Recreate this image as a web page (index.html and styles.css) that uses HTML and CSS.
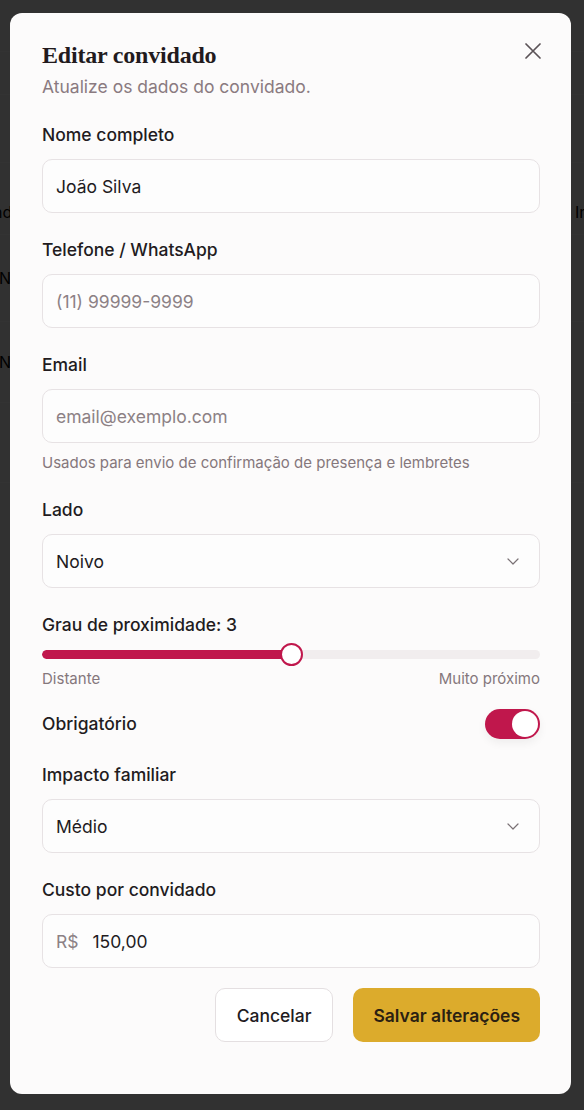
FILE: index.html
```html
<!DOCTYPE html>
<html lang="pt-BR">
<head>
<meta charset="utf-8">
<title>Editar convidado</title>
<link rel="stylesheet" href="styles.css">
</head>
<body>
<div class="page">
  <div class="bg-row r1"></div>
  <div class="bg-row r2"></div>
  <div class="bg-row r3"></div>
  <div class="bg-row r4"><span class="bg-left">Grand</span><span class="bg-right">Impacto</span></div>
  <div class="bg-row r5"><span class="bg-left2">Noivo</span></div>
  <div class="bg-row r6"><span class="bg-left2">Noiva</span></div>
  <div class="bg-row r7"></div>
</div>
<div class="overlay"></div>

<div class="modal" role="dialog">
  <button class="close" aria-label="Fechar">
    <svg width="16" height="16" viewBox="0 0 16 16"><path d="M1 1L15 15M15 1L1 15" stroke="#5b5357" stroke-width="1.7" stroke-linecap="round" fill="none"/></svg>
  </button>
  <h2 class="title">Editar convidado</h2>
  <p class="subtitle">Atualize os dados do convidado.</p>

  <div class="form">
    <div class="field">
      <label class="label">Nome completo</label>
      <div class="input"><span class="value">João Silva</span></div>
    </div>
    <div class="field">
      <label class="label">Telefone / WhatsApp</label>
      <div class="input"><span class="placeholder">(11) 99999-9999</span></div>
    </div>
    <div class="field">
      <label class="label">Email</label>
      <div class="input"><span class="placeholder">email@exemplo.com</span></div>
      <p class="help">Usados para envio de confirmação de presença e lembretes</p>
    </div>
    <div class="field">
      <label class="label">Lado</label>
      <div class="input select"><span class="value">Noivo</span>
        <svg class="chev" width="12" height="7" viewBox="0 0 12 7"><path d="M1 1L6 6L11 1" stroke="#7a7175" stroke-width="1.2" fill="none" stroke-linecap="round" stroke-linejoin="round"/></svg>
      </div>
    </div>
    <div class="field">
      <label class="label">Grau de proximidade: 3</label>
      <div class="range">
        <div class="track"><div class="fill" style="width:50%"></div></div>
        <div class="thumb" style="left:50%"></div>
      </div>
      <div class="range-labels"><span>Distante</span><span>Muito próximo</span></div>
    </div>
    <div class="switch-row">
      <span class="label">Obrigatório</span>
      <span class="switch on"><span class="knob"></span></span>
    </div>
    <div class="field">
      <label class="label">Impacto familiar</label>
      <div class="input select"><span class="value">Médio</span>
        <svg class="chev" width="12" height="7" viewBox="0 0 12 7"><path d="M1 1L6 6L11 1" stroke="#7a7175" stroke-width="1.2" fill="none" stroke-linecap="round" stroke-linejoin="round"/></svg>
      </div>
    </div>
    <div class="field">
      <label class="label">Custo por convidado</label>
      <div class="input"><span class="prefix">R$</span><span class="value">150,00</span></div>
    </div>
  </div>

  <div class="actions">
    <button class="btn btn-outline">Cancelar</button>
    <button class="btn btn-primary">Salvar alterações</button>
  </div>
</div>
</body>
</html>
```

FILE: styles.css
```css
* { box-sizing: border-box; }
html, body { margin: 0; padding: 0; }
body {
  width: 584px;
  height: 1110px;
  overflow: hidden;
  background: #f4f4f4;
  font-family: Inter, "Noto Sans", sans-serif;
}

/* page behind the dialog */
.page { width: 584px; }
.bg-row {
  display: flex;
  justify-content: space-between;
  align-items: flex-end;
  border-bottom: 1px solid #ffffff;
  font-size: 16px;
  color: #000;
  overflow: hidden;
}
.r1 { height: 52px; }
.r2 { height: 43px; }
.r3 { height: 68px; }
.r4 { height: 72px; padding-bottom: 12px; }
.r5 { height: 87px; align-items: center; }
.r6 { height: 81px; align-items: center; }
.r7 { height: 80px; }
.bg-left { margin-left: -34px; }
.bg-right { margin-right: -52px; }
.bg-left2 { margin-left: -1px; }

.overlay {
  position: fixed;
  inset: 0;
  background: rgba(0, 0, 0, 0.8);
}

/* dialog */
.modal {
  position: fixed;
  left: 10px;
  top: 13px;
  width: 561px;
  padding: 28px 31px 52px 32px;
  background: #fcfbfb;
  border-radius: 12px;
  color: #221b1e;
}
.close {
  position: absolute;
  top: 30px;
  left: 515px;
  width: 16px;
  height: 16px;
  padding: 0;
  border: 0;
  background: none;
  display: flex;
}
.title {
  margin: 0;
  font-family: "Liberation Serif", "Times New Roman", serif;
  font-weight: 700;
  font-size: 24px;
  line-height: 28px;
  color: #221a1d;
  letter-spacing: -0.2px;
}
.subtitle {
  margin: 6px 0 0;
  font-size: 17.5px;
  line-height: 24px;
  color: #8a7a80;
}

.form {
  margin-top: 24px;
  display: flex;
  flex-direction: column;
}
.field { display: flex; flex-direction: column; }
.form > * + * { margin-top: 25px; }
.form > .switch-row { margin-top: 20px; }
.form > .switch-row + .field { margin-top: 24px; }

.label {
  font-size: 17.5px;
  line-height: 24px;
  font-weight: 450;
  color: #221b1e;
}
.field .label + * { margin-top: 12px; }

.input {
  height: 54px;
  border: 1px solid #e7e2e4;
  border-radius: 10px;
  background: #fdfdfd;
  display: flex;
  align-items: center;
  padding: 0 13px;
  font-size: 17.5px;
}
.value { color: #221b1e; }
.placeholder { color: #8c8185; }
.prefix { color: #8c8185; margin-right: 14px; }
.select { justify-content: space-between; padding-right: 20px; }
.chev { display: block; }

.help {
  margin: 10px 0 0;
  font-size: 15px;
  line-height: 20px;
  color: #85777c;
}

/* slider */
.field .label + .range { margin-top: 6px; }
.range {
  position: relative;
  height: 22px;
  display: flex;
  align-items: center;
}
.track {
  width: 100%;
  height: 9px;
  border-radius: 5px;
  background: #f1edee;
  overflow: hidden;
}
.fill {
  height: 100%;
  background: #c0174c;
  border-radius: 5px 0 0 5px;
}
.thumb {
  position: absolute;
  top: 0;
  width: 23px;
  height: 23px;
  margin-left: -11.5px;
  border-radius: 50%;
  background: #ffffff;
  border: 2px solid #c0174c;
}
.range-labels {
  margin-top: 4px;
  display: flex;
  justify-content: space-between;
  font-size: 15px;
  line-height: 20px;
  color: #85777c;
}

/* switch */
.switch-row {
  display: flex;
  align-items: center;
  justify-content: space-between;
  height: 30px;
}
.switch {
  width: 55px;
  height: 30px;
  border-radius: 15px;
  background: #c0174c;
  display: flex;
  align-items: center;
  justify-content: flex-end;
  padding: 2px;
  box-shadow: 0 4px 10px rgba(0, 0, 0, 0.06);
}
.knob {
  width: 26px;
  height: 26px;
  border-radius: 50%;
  background: #ffffff;
}

/* actions */
.actions {
  margin-top: 20px;
  display: flex;
  justify-content: flex-end;
  gap: 20px;
}
.btn {
  height: 54px;
  border-radius: 10px;
  font-family: Inter, "Noto Sans", sans-serif;
  font-size: 17.5px;
  font-weight: 450;
  padding: 0 21px;
  cursor: pointer;
}
.btn-outline {
  background: #ffffff;
  border: 1px solid #e4dfe1;
  color: #221b1e;
}
.btn-primary {
  background: #dcab2c;
  border: 0;
  color: #2b1f12;
  font-weight: 600;
  padding: 0 20px;
}
```
